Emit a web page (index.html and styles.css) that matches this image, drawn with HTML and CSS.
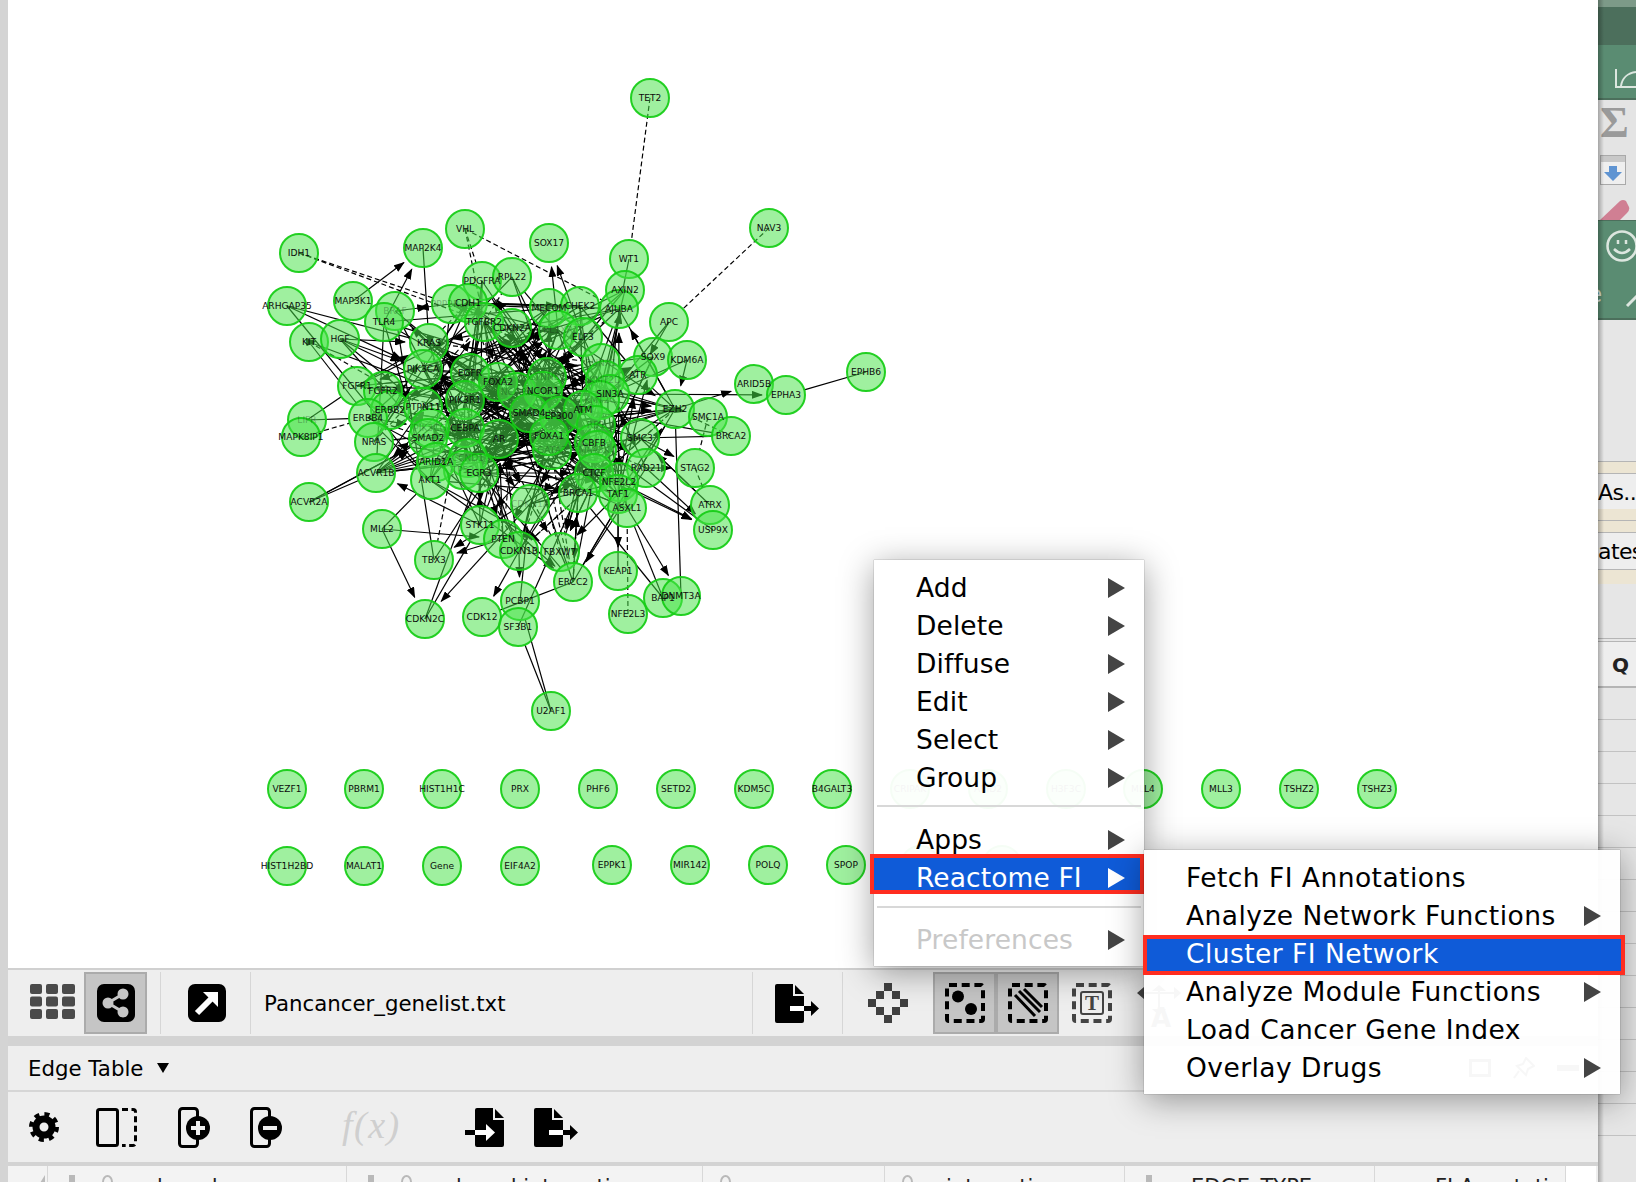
FILE: index.html
```html
<!DOCTYPE html>
<html lang="en">

<head>
    <meta charset="UTF-8">
    <title>Pancancer_genelist.txt</title>
    <link rel="stylesheet" href="styles.css">
</head>

<body>

    <div class="rail"></div>

    <div class="main">
        <div class="canvas">
            <svg id="network" class="network" width="1590" height="968" viewBox="8 0 1590 968">
                <defs>
                    <marker id="arrow" markerUnits="userSpaceOnUse" markerWidth="11" markerHeight="8" refX="10" refY="4" orient="auto">
                        <path d="M0 0L11 4L0 8z" fill="#000"></path>
                    </marker>
                </defs>
                <g id="edges"></g>
                <g id="nodes"></g>
                <g id="labels"></g>
            </svg>
        </div>

        <!-- network view toolbar -->
        <div class="tabbar">
            <svg class="grid-icon" width="45" height="35" viewBox="0 0 45 35" fill="#4a4a4a">
                <rect x="0" y="0" width="12" height="10" rx="2"></rect>
                <rect x="16" y="0" width="12" height="10" rx="2"></rect>
                <rect x="32" y="0" width="13" height="10" rx="2"></rect>
                <rect x="0" y="12.500" width="12" height="10" rx="2"></rect>
                <rect x="16" y="12.500" width="12" height="10" rx="2"></rect>
                <rect x="32" y="12.500" width="13" height="10" rx="2"></rect>
                <rect x="0" y="25" width="12" height="10" rx="2"></rect>
                <rect x="16" y="25" width="12" height="10" rx="2"></rect>
                <rect x="32" y="25" width="13" height="10" rx="2"></rect>
            </svg>
            <div class="toggle share-toggle">
                <svg width="38" height="38" viewBox="0 0 38 38">
                    <rect width="38" height="38" rx="7" fill="#000"></rect>
                    <path d="M26 10L11 19L26 28" fill="none" stroke="#c6c6c6" stroke-width="3"></path>
                    <circle cx="26" cy="10" r="5.500" fill="#c6c6c6"></circle>
                    <circle cx="11" cy="19" r="5.500" fill="#c6c6c6"></circle>
                    <circle cx="26" cy="28" r="5.500" fill="#c6c6c6"></circle>
                </svg>
            </div>
            <div class="sep sep-a"></div>
            <svg class="focus-icon" width="38" height="38" viewBox="0 0 38 38">
                <rect width="38" height="38" rx="7" fill="#000"></rect>
                <path d="M9 29L25 13" stroke="#fff" stroke-width="6"></path>
                <path d="M15 8H30V23z" fill="#fff"></path>
            </svg>
            <div class="sep sep-b"></div>
            <div class="file-name">Pancancer_genelist.txt</div>
            <div class="sep"></div>
            <svg class="export-icon" width="44" height="39" viewBox="0 0 44 39">
                <path d="M2 0H18V12H29V37a2 2 0 0 1-2 2H2a2 2 0 0 1-2-2V2a2 2 0 0 1 2-2z"></path>
                <path d="M20 1L29 10H20z"></path>
                <path d="M15 24.500H30" stroke="#fff" stroke-width="5"></path>
                <path d="M29 22H36V17L44 24.500L36 32V27H29z"></path>
            </svg>
            <div class="sep sep-c"></div>
            <svg class="fit-icon" width="40" height="40" viewBox="0 0 40 40" fill="#404040">
                <rect x="16" y="0" width="8" height="8"></rect>
                <rect x="8" y="8" width="8" height="8"></rect>
                <rect x="24" y="8" width="8" height="8"></rect>
                <rect x="0" y="16" width="8" height="8"></rect>
                <rect x="32" y="16" width="8" height="8"></rect>
                <rect x="8" y="24" width="8" height="8"></rect>
                <rect x="24" y="24" width="8" height="8"></rect>
                <rect x="16" y="32" width="8" height="8"></rect>
            </svg>
            <div class="toggle nodes-toggle">
                <svg width="40" height="40" viewBox="0 0 40 40">
                    <rect class="dash-box" x="2" y="2" width="36" height="36" rx="2"></rect>
                    <circle cx="13" cy="13.500" r="6"></circle>
                    <circle cx="26" cy="26" r="6"></circle>
                </svg>
            </div>
            <div class="toggle">
                <svg width="40" height="40" viewBox="0 0 40 40">
                    <rect class="dash-box" x="2" y="2" width="36" height="36" rx="2"></rect>
                    <path d="M7 12L27 33M11 8L32 29M16 6L34 24" stroke="#000" stroke-width="3" fill="none"></path>
                </svg>
            </div>
            <svg class="label-icon" width="40" height="40" viewBox="0 0 40 40">
                <rect class="dash-box gray" x="2" y="2" width="36" height="36" rx="2"></rect>
                <rect x="9" y="9" width="22" height="22" rx="2" fill="none" stroke="#444" stroke-width="2"></rect>
                <text class="label-t" x="20" y="27" text-anchor="middle">T</text>
            </svg>
            <svg class="move-icon" width="44" height="44" viewBox="0 0 44 44" fill="#444">
                <path d="M0 8L7 2V14zM22 0L15 6H29zM44 8L37 2V14zM22 30L15 24H29z"></path>
                <path d="M6 7H38V9H6zM21 4H23V26H21z"></path>
                <text class="move-a" x="24" y="42" text-anchor="middle">A</text>
            </svg>
        </div>

        <div class="band"></div>

        <!-- table panel -->
        <div class="table-title">
            <span class="title-text">Edge Table</span>
            <svg class="caret" width="12" height="10" viewBox="0 0 12 10"><path d="M0 0H12L6 10z"></path></svg>
            <div class="dock-btns">
                <svg width="22" height="18" viewBox="0 0 22 18"><rect x="1.500" y="1.500" width="19" height="15" fill="none" stroke="#444" stroke-width="3"></rect></svg>
                <svg width="22" height="22" viewBox="0 0 22 22"><path d="M13 1L21 9L15 12L13 18L4 9L10 7zM6 14L1 21" fill="none" stroke="#444" stroke-width="2"></path></svg>
                <svg width="22" height="6" viewBox="0 0 22 6"><rect width="22" height="6" fill="#444"></rect></svg>
            </div>
        </div>

        <div class="table-tools">
            <svg class="gear-icon" width="30" height="30" viewBox="0 0 30 30" fill="none" stroke="#000">
                <circle cx="15" cy="15" r="12.500" stroke-width="5" stroke-dasharray="4.900 4.920"></circle>
                <circle cx="15" cy="15" r="8" stroke-width="7"></circle>
            </svg>
            <svg class="columns-icon" width="41" height="39" viewBox="0 0 41 39" fill="none" stroke="#000" stroke-width="3">
                <rect x="1.500" y="1.500" width="20" height="36" rx="2"></rect>
                <path d="M26 1.500H37a2.500 2.500 0 0 1 2.500 2.500V35a2.500 2.500 0 0 1-2.500 2.500H26" stroke-dasharray="6 3.500"></path>
            </svg>
            <svg class="add-icon" width="32" height="41" viewBox="0 0 32 41">
                <rect x="1.500" y="1.500" width="18" height="38" rx="3" fill="none" stroke="#000" stroke-width="3"></rect>
                <circle cx="20" cy="21" r="12"></circle>
                <path d="M20 14V28M13 21H27" stroke="#eee" stroke-width="4"></path>
            </svg>
            <svg class="remove-icon" width="32" height="41" viewBox="0 0 32 41">
                <rect x="1.500" y="1.500" width="18" height="38" rx="3" fill="none" stroke="#000" stroke-width="3"></rect>
                <circle cx="20" cy="21" r="12"></circle>
                <path d="M13 21H27" stroke="#eee" stroke-width="4"></path>
            </svg>
            <div class="fx">f(x)</div>
            <svg class="import-icon" width="40" height="39" viewBox="0 0 40 39">
                <path d="M12 0H28V12H39V37a2 2 0 0 1-2 2H12a2 2 0 0 1-2-2V2a2 2 0 0 1 2-2z"></path>
                <path d="M30 1L39 10H30z"></path>
                <path d="M0 22H10V27H0z"></path>
                <path d="M10 24.500H22" stroke="#fff" stroke-width="5"></path>
                <path d="M21 16L30 24.500L21 33z" fill="#fff"></path>
            </svg>
            <svg class="export-small" width="44" height="39" viewBox="0 0 44 39">
                <path d="M2 0H18V12H29V37a2 2 0 0 1-2 2H2a2 2 0 0 1-2-2V2a2 2 0 0 1 2-2z"></path>
                <path d="M20 1L29 10H20z"></path>
                <path d="M15 24.500H30" stroke="#fff" stroke-width="5"></path>
                <path d="M29 22H36V17L44 24.500L36 32V27H29z"></path>
            </svg>
        </div>

        <div class="band thin"></div>

        <div class="table-head">
            <div class="col first"><svg width="10" height="16" viewBox="0 0 10 16"><path d="M10 0V16H0z" fill="#bbb"></path></svg></div>
            <div class="col"><span class="pin"></span><span class="lens"></span><span class="col-name">shared name</span></div>
            <div class="col"><span class="pin"></span><span class="lens"></span><span class="col-name">shared interaction</span></div>
            <div class="col"><span class="lens alone"></span><span class="col-name">name</span></div>
            <div class="col"><span class="lens alone"></span><span class="col-name">interaction</span></div>
            <div class="col"><span class="pin"></span><span class="col-name wide">EDGE_TYPE</span></div>
            <div class="col"><span class="pin"></span><span class="col-name wide">FI Annotation</span></div>
            <div class="col blank"></div>
        </div>
    </div>

    <!-- cut-off control panel on the right -->
    <div class="side">
        <div class="s-top"></div>
        <div class="s-dark"></div>
        <div class="s-green s-chart">
            <svg width="21" height="20" viewBox="0 0 21 20" fill="none" stroke="#dce6df" stroke-width="2"><path d="M1 0V18H21M6 17C7 9 13 4 21 3"></path></svg>
        </div>
        <div class="s-tools">
            <div class="sigma">Σ</div>
            <svg class="down-box" width="26" height="30" viewBox="0 0 26 30">
                <rect x="0.500" y="0.500" width="25" height="29" fill="#efefef" stroke="#a9a9a9"></rect>
                <rect x="1" y="1" width="24" height="6" fill="#c8c8c8"></rect>
                <path d="M9 11H17V17H22L13 26L4 17H9z" fill="#5f94d2"></path>
            </svg>
            <svg class="eraser" width="30" height="20" viewBox="0 0 30 20"><path d="M0 20L20 1Q23 -1 26 1L29 7Q30 10 27 13L20 20z" fill="#d07f93"></path></svg>
        </div>
        <div class="s-green s-smile">
            <svg class="smile" width="38" height="38" viewBox="0 0 38 38" fill="none" stroke="#dce6df" stroke-width="2.500">
                <circle cx="16" cy="17" r="14.500"></circle>
                <path d="M8 20Q16 28 24 20M12 11V15M20 11V15"></path>
            </svg>
            <div class="s-e">e</div>
            <svg class="s-stroke" width="12" height="14" viewBox="0 0 12 14"><path d="M2 12L12 2" stroke="#dce6df" stroke-width="3"></path></svg>
        </div>
        <div class="s-blank"></div>
        <div class="s-tan"></div>
        <div class="s-row">As...</div>
        <div class="s-tan small"></div>
        <div class="s-tan small"></div>
        <div class="s-row tall">ates</div>
        <div class="s-tan big"></div>
        <div class="s-blank mid"></div>
        <div class="s-row q">Q</div>
        <div class="s-rows">
            <div></div><div></div><div></div><div></div><div></div><div></div><div></div>
            <div></div><div></div><div></div><div></div><div></div><div></div><div></div>
        </div>
    </div>

    <!-- context menu -->
    <div class="menu main-menu">
        <div class="item">Add<span class="tri"></span></div>
        <div class="item">Delete<span class="tri"></span></div>
        <div class="item">Diffuse<span class="tri"></span></div>
        <div class="item">Edit<span class="tri"></span></div>
        <div class="item">Select<span class="tri"></span></div>
        <div class="item">Group<span class="tri"></span></div>
        <div class="divider"></div>
        <div class="item">Apps<span class="tri"></span></div>
        <div class="item hot">Reactome FI<span class="tri"></span></div>
        <div class="divider after-hot"></div>
        <div class="item off">Preferences<span class="tri"></span></div>
    </div>

    <div class="menu sub-menu">
        <div class="item">Fetch FI Annotations</div>
        <div class="item">Analyze Network Functions<span class="tri"></span></div>
        <div class="item hot">Cluster FI Network</div>
        <div class="item">Analyze Module Functions<span class="tri"></span></div>
        <div class="item">Load Cancer Gene Index</div>
        <div class="item">Overlay Drugs<span class="tri"></span></div>
    </div>

    <script src="graph.js"></script>
</body>

</html>
```

FILE: styles.css
```css
/* General Styles */
html, body {
    margin: 0;
    height: 1182px;
    overflow: hidden;
}

body {
    display: flex;
    width: 1636px;
    position: relative;
    font-family: 'DejaVu Sans', sans-serif;
    background-color: #eeeeee;
    color: #000000;
}

.rail {
    width: 8px;
    flex: none;
    background-color: #d4d4d4;
}

.main {
    width: 1590px;
    flex: none;
    display: flex;
    flex-direction: column;
}

/* Network canvas */
.canvas {
    height: 968px;
    flex: none;
    background-color: #ffffff;
}

.network {
    display: block;
}

.edge {
    stroke: #000000;
    stroke-width: 1.200;
    fill: none;
}

.edge.dashed {
    stroke-dasharray: 5 3;
}

.node {
    fill: rgba(74, 226, 74, 0.53);
    stroke: rgba(24, 205, 24, 0.95);
    stroke-width: 2;
}

.gene {
    font-family: 'DejaVu Sans', sans-serif;
    font-size: 9.100px;
    fill: #0c0c0c;
    text-anchor: middle;
    dominant-baseline: central;
}

/* labels that sit under other nodes in the cluster */
.gene.buried {
    fill-opacity: 0.3;
}

/* Toolbars */
.tabbar {
    height: 68px;
    flex: none;
    box-sizing: border-box;
    display: flex;
    align-items: center;
    background-color: #eeeeee;
    border-top: 2px solid #d0d0d0;
    overflow: hidden;
}

.band {
    height: 10px;
    flex: none;
    background-color: #d3d3d3;
}

.band.thin {
    height: 4px;
}

.grid-icon {
    margin-left: 22px;
    margin-bottom: 4px;
    flex: none;
}

.toggle {
    width: 63px;
    height: 62px;
    flex: none;
    box-sizing: border-box;
    display: flex;
    align-items: center;
    justify-content: center;
    background-color: #c5c5c5;
    border: 2px solid #ababab;
}

.share-toggle {
    margin-left: 9px;
}

.nodes-toggle {
    margin-left: 25px;
}

.sep {
    width: 1px;
    height: 62px;
    flex: none;
    background-color: #d6d6d6;
}

.sep-a {
    margin-left: 13px;
}

.focus-icon {
    margin-left: 27px;
    flex: none;
}

.sep-b {
    margin-left: 24px;
}

.file-name {
    width: 488px;
    margin-left: 13px;
    flex: none;
    font-size: 21.300px;
}

.export-icon {
    margin-left: 22px;
    flex: none;
}

.sep-c {
    margin-left: 23px;
}

.fit-icon {
    margin-left: 25px;
    flex: none;
}

.dash-box {
    fill: none;
    stroke: #000000;
    stroke-width: 4;
    stroke-dasharray: 8 4.700;
}

.dash-box.gray {
    stroke: #444444;
}

.label-icon {
    margin-left: 13px;
    flex: none;
}

.label-t {
    font-family: 'Liberation Serif', serif;
    font-weight: bold;
    font-size: 21px;
    fill: #444444;
}

.move-icon {
    margin-left: 25px;
    margin-top: 8px;
    flex: none;
}

.move-a {
    font-size: 26px;
    font-weight: bold;
}

.table-title {
    height: 46px;
    flex: none;
    box-sizing: border-box;
    display: flex;
    align-items: center;
    padding-left: 20px;
    background-color: #eeeeee;
    border-bottom: 2px solid #d6d6d6;
}

.title-text {
    font-size: 21.300px;
    padding-top: 1px;
}

.caret {
    margin-left: 14px;
}

.dock-btns {
    margin-left: 1300px;
    display: flex;
    align-items: center;
    gap: 22px;
}

.table-tools {
    height: 70px;
    flex: none;
    display: flex;
    align-items: center;
    background-color: #eeeeee;
}

.gear-icon {
    margin-left: 21px;
    flex: none;
}

.columns-icon {
    margin-left: 37px;
    flex: none;
}

.add-icon {
    margin-left: 41px;
    flex: none;
}

.remove-icon {
    margin-left: 40px;
    flex: none;
}

.fx {
    width: 58px;
    margin-left: 60px;
    padding-bottom: 4px;
    flex: none;
    font-family: 'Liberation Serif', serif;
    font-style: italic;
    font-size: 38px;
    letter-spacing: 1.500px;
    color: #cfcfcf;
}

.import-icon {
    margin-left: 65px;
    flex: none;
}

.export-small {
    margin-left: 29px;
    flex: none;
}

/* Table header, cut by the window edge */
.table-head {
    flex: 1;
    display: grid;
    grid-template-columns: 40px 299px 356px 182px 240px 250px 191px 30px;
    background-color: #eeeeee;
}

.col {
    display: flex;
    box-sizing: border-box;
    height: 40px;
    padding-top: 9px;
    background-color: #f3f3f3;
    border-right: 1px solid #d8d8d8;
    font-size: 21px;
    color: #222222;
}

.col.first {
    padding-left: 27px;
}

.col.blank {
    background-color: #ffffff;
    border-right: none;
}

.pin {
    width: 6px;
    height: 20px;
    margin-left: 21px;
    background-color: #b9b9b9;
}

.lens {
    width: 11px;
    height: 14px;
    margin-left: 27px;
    box-sizing: border-box;
    border: 2px solid #b9b9b9;
    border-radius: 50%;
}

.lens.alone {
    margin-left: 17px;
}

.col-name {
    margin-left: 33px;
    white-space: nowrap;
}

.col-name.wide {
    margin-left: 39px;
}

/* Right panel */
.side {
    width: 38px;
    flex: none;
    display: flex;
    flex-direction: column;
    position: relative;
    overflow: hidden;
    background-color: #e6e6e6;
}

.side::before {
    content: "";
    position: absolute;
    z-index: 2;
    left: 0;
    top: 0;
    bottom: 0;
    width: 6px;
    background: linear-gradient(to right, rgba(0, 0, 0, 0.28), rgba(0, 0, 0, 0));
}

.s-top {
    height: 7px;
    flex: none;
    background-color: #7d9a88;
}

.s-dark {
    height: 38px;
    flex: none;
    background-color: #4c6f5c;
}

.s-green {
    flex: none;
    background-color: #5a8c72;
    position: relative;
    box-sizing: border-box;
}

.s-chart {
    height: 55px;
    padding: 24px 0 0 17px;
    border-bottom: 2px solid #4c6f5c;
}

.s-tools {
    height: 120px;
    flex: none;
    overflow: hidden;
    background-color: #e4e4e4;
    padding-left: 2px;
}

.sigma {
    height: 55px;
    font-family: 'Liberation Serif', serif;
    font-weight: bold;
    font-size: 44px;
    line-height: 46px;
    color: #9a9a9a;
}

.down-box {
    display: block;
}

.eraser {
    display: block;
    margin-top: 15px;
}

.s-smile {
    height: 100px;
    border-top: 1px solid #4c6f5c;
    border-bottom: 2px solid #4c6f5c;
    padding: 8px 0 0 8px;
}

.smile {
    display: block;
}

.s-e {
    position: absolute;
    left: -10px;
    top: 60px;
    font-size: 23px;
    color: #dce6df;
}

.s-stroke {
    position: absolute;
    left: 27px;
    top: 73px;
}

.s-blank {
    height: 141px;
    flex: none;
}

.s-blank.mid {
    height: 54px;
    border-bottom: 4px double #b5b5b5;
}

.s-tan {
    flex: none;
    height: 11px;
    background-color: #ece5d3;
    border-top: 1px solid #b5b5b5;
    border-bottom: 1px solid #b5b5b5;
}

.s-tan.small {
    height: 11px;
    border-top: none;
}

.s-tan.big {
    height: 14px;
    border-top: none;
    border-bottom: none;
}

.s-row {
    height: 35px;
    flex: none;
    font-size: 22px;
    letter-spacing: -0.600px;
    line-height: 38px;
    background-color: #eeeeee;
    white-space: nowrap;
}

.s-row.tall {
    height: 36px;
    border-bottom: 1px solid #b5b5b5;
}

.s-row.q {
    height: 44px;
    padding-left: 14px;
    line-height: 46px;
    font-size: 20px;
    font-weight: bold;
    color: #222222;
    border-bottom: 2px solid #b5b5b5;
}

.s-rows div {
    height: 31px;
    border-bottom: 1px solid #c2c2c2;
}

/* Context menus */
.menu {
    position: absolute;
    z-index: 5;
    box-sizing: border-box;
    background-color: rgba(255, 255, 255, 0.955);
    box-shadow: 0 6px 32px rgba(0, 0, 0, 0.38), 0 0 1px rgba(0, 0, 0, 0.5);
    font-size: 26.500px;
    letter-spacing: 0.100px;
}

.main-menu {
    left: 874px;
    top: 560px;
    width: 270px;
    height: 406px;
    padding-top: 8px;
}

.sub-menu {
    left: 1144px;
    top: 850px;
    width: 476px;
    height: 244px;
    padding-top: 8px;
    z-index: 6;
    letter-spacing: 0.450px;
}

.item {
    height: 38px;
    line-height: 40px;
    padding-left: 42px;
    position: relative;
    white-space: nowrap;
}

.tri {
    position: absolute;
    left: 234px;
    top: 10px;
    width: 0;
    height: 0;
    border-left: 17px solid #444444;
    border-top: 10px solid transparent;
    border-bottom: 10px solid transparent;
}

.sub-menu .tri {
    left: 440px;
}

.divider {
    height: 2px;
    margin: 9px 3px 13px 3px;
    background-color: #d8d8d8;
}

.divider.after-hot {
    margin: 16px 3px 14px 3px;
}

.item.off {
    color: #c8c8c8;
    margin-top: -2px;
}

.item.hot {
    background-color: #0f5bd8;
    color: #ffffff;
    outline: 4px solid #ff2d20;
}

.main-menu .item.hot {
    height: 32px;
    margin-right: 4px;
}

.sub-menu .item.hot {
    height: 32px;
    line-height: 30px;
    margin: 5px -1px 1px 3px;
    padding-left: 39px;
}

.item.hot .tri {
    border-left-color: #ffffff;
}
```

FILE: graph.js
```js
// gene name, x, y
const genes = [
    ["TET2",650,98],["NAV3",769,228],["IDH1",299,253],["VHL",465,229],["SOX17",549,243],["MAP2K4",423,248],
    ["WT1",629,259],["PDGFRA",482,281],["RPL22",512,277],["AXIN2",625,290],["ARHGAP35",287,306],["MAP3K1",353,301],
    ["BRAF",395,311],["PPP2R1A",451,304],["CDH1",468,303],["MECOM",549,308],["CHEK2",580,306],["AJUBA",619,309],
    ["APC",669,322],["TLR4",384,322],["KIT",309,342],["HGF",340,339],["TGFBR2",484,322],["CDKN2A",512,328],
    ["TBL1XR1",558,330],["ELF3",583,337],["KRAS",429,343],["SOX9",653,357],["KDM6A",687,360],["RUNX1",601,363],
    ["PIK3CA",423,369],["EGFR",470,373],["FOXA2",498,382],["FGFR1",357,386],["FGFR2",383,391],["CTNNB1",547,377],
    ["ATR",638,375],["NCOR2",517,392],["ERBB2",390,410],["PIK3R1",465,400],["PTPN11",423,407],["ERBB4",368,418],
    ["LIFR",307,420],["MAPK8IP1",301,437],["NCOR1",543,391],["KMT2D",605,380],["SIN3A",610,394],["KMT2C",600,400],
    ["SMAD4",529,413],["EP300",559,416],["ATM",583,410],["RB1",596,425],["CEBPA",465,428],["PIK3CG",430,428],
    ["SMAD2",428,438],["AR",499,439],["GATA3",552,450],["FOXA1",549,436],["CBFB",594,443],["MAP3K4",597,450],
    ["NRAS",374,442],["ACVR1B",376,473],["ARID1A",436,462],["CCND1",468,458],["TP53",463,470],["EGR3",479,473],
    ["AKT1",430,480],["CTCF",594,473],["EZH2",675,409],["ARID5B",754,384],["EPHA3",786,395],["EPHB6",866,372],
    ["SMC1A",708,417],["BRCA2",731,436],["SMC3",640,438],["STAG2",695,468],["RAD21",646,468],["NFE2L2",619,482],
    ["TAF1",618,494],["BRCA1",578,493],["ASXL1",627,508],["ATRX",710,505],["USP9X",713,530],["CDKN1A",530,504],
    ["ACVR2A",309,502],["MLL2",382,529],["TBX3",434,560],["STK11",480,525],["PTEN",503,539],["CDKN1B",519,551],
    ["FBXW7",560,552],["ERCC2",573,582],["KEAP1",618,571],["NFE2L3",628,614],["BAP1",663,598],["DNMT3A",681,596],
    ["PCBP1",520,601],["CDK12",482,617],["SF3B1",518,627],["CDKN2C",425,619],["U2AF1",551,711],
    ["VEZF1",287,789],["PBRM1",364,789],["HIST1H1C",442,789],["PRX",520,789],["PHF6",598,789],["SETD2",676,789],
    ["KDM5C",754,789],["B4GALT3",832,789],["CRIPAK",910,789],["ARID2",988,789],["H3F3C",1066,789],["MLL4",1143,789],
    ["MLL3",1221,789],["TSHZ2",1299,789],["TSHZ3",1377,789],
    ["HIST1H2BD",287,866],["MALAT1",364,866],["Gene",442,866],["EIF4A2",520,866],["EPPK1",612,865],["MIR142",690,865],
    ["POLQ",768,865],["SPOP",846,865],["NF1",920,865],["SETBP1",1002,865]
];

// a = arrow, d = dashed, n = plain line
const links = [
    ["TET2","WT1","d"],["NAV3","APC","d"],["IDH1","PPP2R1A","d"],["VHL","AJUBA","d"],["VHL","TGFBR2","d"],
    ["TBL1XR1","SOX17","a"],["ELF3","SOX17","a"],["MAP3K1","MAP2K4","a"],["TLR4","MAP2K4","a"],["MAP2K4","KRAS","n"],
    ["APC","SIN3A","n"],["APC","ATR","a"],["EPHB6","EPHA3","n"],["EZH2","ARID5B","a"],["SIN3A","EPHA3","a"],
    ["MLL2","CDKN2C","a"],["MLL2","PTEN","a"],["MLL2","AKT1","n"],["CDKN2C","STK11","n"],["CDKN2C","EGR3","n"],
    ["CDKN1A","CDKN2C","a"],["ERCC2","CDK12","n"],["ERCC2","BRCA1","a"],["U2AF1","SF3B1","n"],["U2AF1","PCBP1","n"],
    ["DNMT3A","EZH2","n"],["KEAP1","AJUBA","a"],["NFE2L3","ASXL1","d"],["BAP1","ASXL1","n"],["BAP1","BRCA1","n"],
    ["ASXL1","DNMT3A","a"],["TAF1","KEAP1","a"],["ACVR2A","ACVR1B","n"],["ACVR2A","SMAD2","n"],["ACVR2A","SMAD2","a"],
    ["RAD21","USP9X","a"],["NFE2L2","USP9X","a"],["CTCF","USP9X","a"],["SMC3","ATRX","n"],["STAG2","ATRX","d"],
    ["BRCA2","EZH2","d"],["SMC1A","STAG2","d"],["RAD21","STAG2","a"],["SMC3","STAG2","a"],["SIN3A","SMC1A","a"],
    ["ATM","BRCA2","n"],["SMC3","BRCA2","n"],["LIFR","FGFR1","n"],["LIFR","ERBB4","n"],["MAPK8IP1","ERBB4","d"],
    ["ARHGAP35","KRAS","n"],["ARHGAP35","AKT1","n"],["ARHGAP35","PIK3CA","a"],["KIT","HGF","a"],["KIT","ERBB4","n"],
    ["HGF","KRAS","a"],["HGF","PIK3CA","a"],["HGF","PTPN11","a"],["HGF","PIK3R1","a"],["HGF","SMAD2","n"],
    ["KIT","PIK3R1","n"],["KIT","PTPN11","d"],["FBXW7","ERCC2","n"],["PTEN","TBX3","a"],["CDKN1A","FBXW7","a"],
    ["BRCA1","FBXW7","a"],["TAF1","FBXW7","a"],["CDKN1B","PCBP1","a"],["PCBP1","CDKN1A","a"],["SF3B1","BRCA1","n"],
    ["CDKN1B","CDK12","a"],["AJUBA","SIN3A","n"],["WT1","AJUBA","n"],["SOX9","RUNX1","n"],["KDM6A","EZH2","a"],
    ["KDM6A","SIN3A","n"],["NRAS","KRAS","a"],["ACVR1B","SMAD2","a"],["ACVR1B","SMAD4","n"],["PPP2R1A","MECOM","n"],
    ["CDH1","CHEK2","a"],["CDH1","AJUBA","n"],["VHL","PDGFRA","d"],["IDH1","TGFBR2","d"],["BRAF","PPP2R1A","a"],
    ["TLR4","AKT1","n"],["USP9X","CBFB","a"],["ATRX","SMC3","a"],["SIN3A","EZH2","n"],["KMT2C","EZH2","a"]
];

const buried = ["KMT2C","KMT2D","RB1","TP53","MAP3K4","GATA3","NCOR2","CTNNB1","CCND1","PIK3CG","BRAF","PPP2R1A","TBL1XR1","LIFR","RUNX1","CDKN1A"];

const byName = {};
genes.forEach(function (g) { byName[g[0]] = g; });

// small seeded generator so the hairball in the middle stays the same on every load
let seed = 20190;
function rand() {
    seed = (seed * 1664525 + 1013904223) % 4294967296;
    return seed / 4294967296;
}

const center = [520, 420];
const cluster = genes.filter(function (g) {
    const dx = g[1] - center[0];
    const dy = g[2] - center[1];
    return Math.sqrt(dx * dx + dy * dy) < 175 && g[2] < 600;
});

// a good part of the lines run from one of these hubs out to somewhere in the cluster
const hubs = ["SIN3A","ATM","CBFB","FOXA1","AR","SMAD4","PIK3R1","EGFR","PIK3CA","KRAS","EGR3","CTCF","EZH2","BRCA1","RUNX1","TGFBR2"];

for (let i = 0; i < 360; i++) {
    const a = rand() < 0.6 ? byName[hubs[Math.floor(rand() * hubs.length)]] : cluster[Math.floor(rand() * cluster.length)];
    const b = cluster[Math.floor(rand() * cluster.length)];
    if (a === b) continue;
    const kind = rand();
    const flip = rand() < 0.5;
    const type = kind < 0.14 ? "d" : kind < 0.62 ? "a" : "n";
    links.push(flip ? [b[0], a[0], type] : [a[0], b[0], type]);
}

function edgeLine(link) {
    const from = byName[link[0]];
    const to = byName[link[1]];
    const dx = to[1] - from[1];
    const dy = to[2] - from[2];
    const len = Math.sqrt(dx * dx + dy * dy);
    const gap = link[2] === "a" ? 24 : 19;
    const x2 = to[1] - dx / len * gap;
    const y2 = to[2] - dy / len * gap;
    const cls = link[2] === "d" ? "edge dashed" : "edge";
    const marker = link[2] === "a" ? ' marker-end="url(#arrow)"' : "";
    return `<line class="${cls}" x1="${from[1]}" y1="${from[2]}" x2="${x2.toFixed(1)}" y2="${y2.toFixed(1)}"${marker}></line>`;
}

document.getElementById("edges").innerHTML = links.map(edgeLine).join("");

document.getElementById("nodes").innerHTML = genes.map(function (g) {
    return `<circle class="node" cx="${g[1]}" cy="${g[2]}" r="19"></circle>`;
}).join("");

document.getElementById("labels").innerHTML = genes.map(function (g) {
    const cls = buried.includes(g[0]) ? "gene buried" : "gene";
    return `<text class="${cls}" x="${g[1]}" y="${g[2]}">${g[0]}</text>`;
}).join("");
```
